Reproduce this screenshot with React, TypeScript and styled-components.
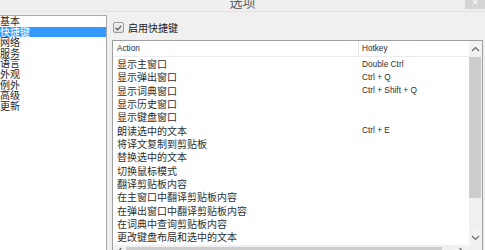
import styled, { createGlobalStyle } from 'styled-components';

// options dialog, hotkeys page

const categories = ['基本', '快捷键', '网络', '服务', '语言', '外观', '例外', '高级', '更新'];

const hotkeys: { action: string; key: string }[] = [
  { action: '显示主窗口', key: 'Double Ctrl' },
  { action: '显示弹出窗口', key: 'Ctrl + Q' },
  { action: '显示词典窗口', key: 'Ctrl + Shift + Q' },
  { action: '显示历史窗口', key: '' },
  { action: '显示键盘窗口', key: '' },
  { action: '朗读选中的文本', key: 'Ctrl + E' },
  { action: '将译文复制到剪贴板', key: '' },
  { action: '替换选中的文本', key: '' },
  { action: '切换鼠标模式', key: '' },
  { action: '翻译剪贴板内容', key: '' },
  { action: '在主窗口中翻译剪贴板内容', key: '' },
  { action: '在弹出窗口中翻译剪贴板内容', key: '' },
  { action: '在词典中查询剪贴板内容', key: '' },
  { action: '更改键盘布局和选中的文本', key: '' },
  { action: '在词典中查询选中的文本', key: '' },
];

const Chevron = ({ dir }: { dir: 'up' | 'down' | 'left' | 'right' }) => {
  const pts = {
    up: '1,5 4.5,1.5 8,5',
    down: '1,2 4.5,5.5 8,2',
    left: '5.5,1 2,4.5 5.5,8',
    right: '2.5,1 6,4.5 2.5,8',
  }[dir];
  const vertical = dir === 'up' || dir === 'down';
  return (
    <svg width={vertical ? 9 : 8} height={vertical ? 7 : 9} viewBox={vertical ? '0 0 9 7' : '0 0 8 9'}>
      <polyline points={pts} fill="none" stroke="#6a6a6a" strokeWidth="1.2" />
    </svg>
  );
};

export default function App() {
  return (
    <>
      <GlobalStyle />
      <Window>
        <TitleBar>
          <Title>选项</Title>
          <Close>×</Close>
        </TitleBar>
        <Body>
          <SideList>
            {categories.map((c) => (
              <ListItem key={c} $active={c === '快捷键'}>
                {c}
              </ListItem>
            ))}
          </SideList>
          <Main>
            <CheckRow>
              <CheckBox>
                <svg width="7" height="6" viewBox="0 0 7 6">
                  <polyline points="0.8,3 2.7,4.8 6.2,0.8" fill="none" stroke="#444" strokeWidth="1.1" />
                </svg>
              </CheckBox>
              <CheckLabel>启用快捷键</CheckLabel>
            </CheckRow>
            <TableFrame>
              <TableArea>
                <HeaderRow>
                  <HeadCell>Action</HeadCell>
                  <HeadCell $divider>Hotkey</HeadCell>
                </HeaderRow>
                <Rows>
                  {hotkeys.map((h) => (
                    <Row key={h.action}>
                      <ActionCell>{h.action}</ActionCell>
                      <KeyCell>{h.key}</KeyCell>
                    </Row>
                  ))}
                </Rows>
              </TableArea>
              <VScroll>
                <ArrowBtn $h={16}>
                  <Chevron dir="up" />
                </ArrowBtn>
                <Thumb $size={141} />
                <Track />
                <ArrowBtn $h={16}>
                  <Chevron dir="down" />
                </ArrowBtn>
              </VScroll>
              <HScroll>
                <ArrowBtn $w={13}>
                  <Chevron dir="left" />
                </ArrowBtn>
                <Thumb $size={316} $horizontal />
                <Track />
                <ArrowBtn $w={16}>
                  <Chevron dir="right" />
                </ArrowBtn>
              </HScroll>
              <Corner />
            </TableFrame>
          </Main>
        </Body>
      </Window>
    </>
  );
}

const GlobalStyle = createGlobalStyle`
  html, body {
    margin: 0;
    padding: 0;
  }
  body {
    background: #f0f0f0;
    font-family: "Noto Sans CJK SC", "Noto Sans", sans-serif;
  }
`;

const Window = styled.div`
  width: 485px;
  height: 250px;
  overflow: hidden;
  display: flex;
  flex-direction: column;
  background: #f0f0f0;
`;

const TitleBar = styled.div`
  flex-shrink: 0;
  height: 11px;
  border-bottom: 1px solid #e2e2e2;
  display: grid;
  grid-template-columns: 1fr auto 1fr;
  overflow: hidden;
  background: #efefef;
`;

const Title = styled.div`
  grid-column: 2;
  margin-top: -5px;
  font-size: 13px;
  line-height: 13px;
  color: #5c5c5c;
`;

const Close = styled.div`
  justify-self: end;
  width: 20px;
  height: 9px;
  background: #d4d4d4;
  color: #fff;
  font-family: "Liberation Sans", sans-serif;
  font-size: 11px;
  line-height: 4px;
  text-align: center;
`;

const Body = styled.div`
  flex: 1;
  min-height: 0;
  display: flex;
  padding-top: 3px;
`;

const SideList = styled.div`
  width: 106px;
  flex-shrink: 0;
  background: #fff;
  border-top: 1px solid #a9a9a9;
  border-right: 1px solid #a9a9a9;
`;

const ListItem = styled.div<{ $active: boolean }>`
  height: 10.6px;
  line-height: 10.6px;
  font-size: 10px;
  color: ${({ $active }) => ($active ? '#fff' : '#1e1e1e')};
  background: ${({ $active }) => ($active ? '#3399ff' : 'transparent')};
  white-space: nowrap;
`;

const Main = styled.div`
  flex: 1;
  min-width: 0;
  display: flex;
  flex-direction: column;
  padding: 0 2px 0 5px;
`;

const CheckRow = styled.div`
  flex-shrink: 0;
  height: 25px;
  display: flex;
  align-items: center;
  gap: 4px;
  padding-left: 1px;
`;

const CheckBox = styled.div`
  width: 9px;
  height: 9px;
  border: 1px solid #9c9c9c;
  border-radius: 2px;
  background: linear-gradient(#f2f2f2, #dcdcdc);
  display: flex;
  align-items: center;
  justify-content: center;
`;

const CheckLabel = styled.span`
  font-size: 10px;
  line-height: 12px;
  color: #222;
`;

const TableFrame = styled.div`
  flex-shrink: 0;
  height: 217px;
  border: 1px solid #a0a0a0;
  background: #fff;
  display: grid;
  grid-template-columns: 1fr 13px;
  grid-template-rows: 204px 13px;
`;

const TableArea = styled.div`
  display: flex;
  flex-direction: column;
  overflow: hidden;
`;

const HeaderRow = styled.div`
  flex-shrink: 0;
  height: 15px;
  display: grid;
  grid-template-columns: 245px 1fr;
  border-bottom: 1px solid #ececec;
`;

const HeadCell = styled.div<{ $divider?: boolean }>`
  display: flex;
  align-items: center;
  padding-left: ${({ $divider }) => ($divider ? '3px' : '4px')};
  border-left: ${({ $divider }) => ($divider ? '1px solid #e5e5e5' : 'none')};
  font-family: "Liberation Sans", sans-serif;
  font-size: 8.2px;
  color: #2a2a2a;
`;

const Rows = styled.div`
  flex: 1;
  overflow: hidden;
`;

const Row = styled.div`
  height: 13.33px;
  display: grid;
  grid-template-columns: 245px 1fr;
  align-items: center;
`;

const ActionCell = styled.div`
  padding-left: 4px;
  font-size: 10px;
  line-height: 13.33px;
  color: #2e2e2e;
  white-space: nowrap;
`;

const KeyCell = styled.div`
  padding-left: 4px;
  font-family: "Liberation Sans", sans-serif;
  font-size: 8.3px;
  color: #2e2e2e;
  white-space: nowrap;
`;

const VScroll = styled.div`
  display: flex;
  flex-direction: column;
  background: #f0f0f0;
`;

const HScroll = styled.div`
  display: flex;
  background: #f0f0f0;
`;

const ArrowBtn = styled.div<{ $h?: number; $w?: number }>`
  flex-shrink: 0;
  ${({ $h }) => ($h ? `height: ${$h}px;` : '')}
  ${({ $w }) => ($w ? `width: ${$w}px;` : '')}
  display: flex;
  align-items: center;
  justify-content: center;
  background: #f2f2f2;
`;

const Thumb = styled.div<{ $size: number; $horizontal?: boolean }>`
  flex-shrink: 0;
  ${({ $size, $horizontal }) => ($horizontal ? `width: ${$size}px;` : `height: ${$size}px;`)}
  background: #cdcdcd;
  ${({ $horizontal }) => ($horizontal ? 'margin: 2px 0 0;' : 'margin: 0 1px 0 0;')}
`;

const Track = styled.div`
  flex: 1;
  background: #f0f0f0;
`;

const Corner = styled.div`
  background: #f0f0f0;
`;
